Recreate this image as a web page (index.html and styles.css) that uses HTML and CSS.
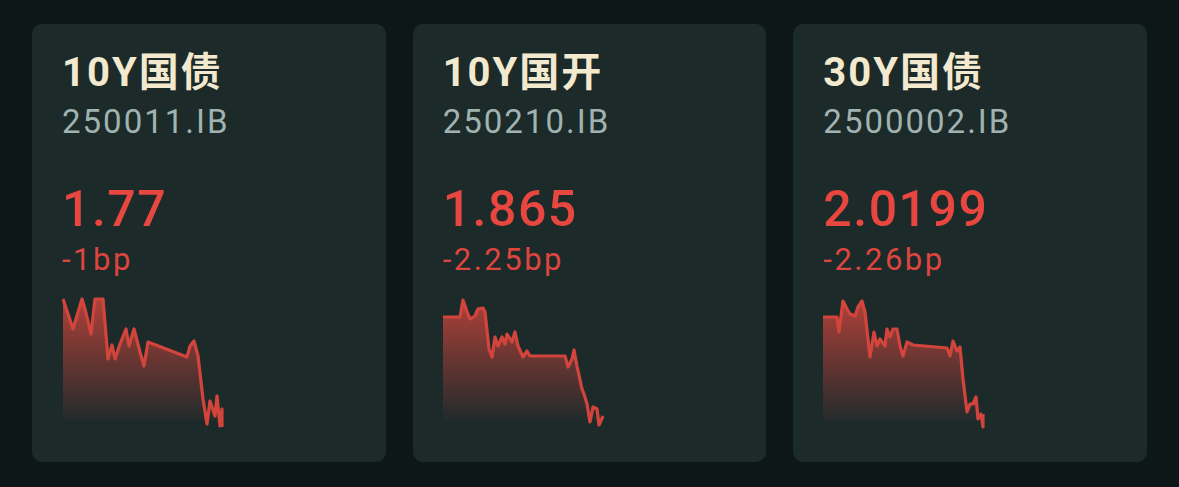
FILE: index.html
```html
<!DOCTYPE html>
<html lang="zh-CN">
<head>
  <meta charset="UTF-8">
  <title>Bond Yields</title>
  <link rel="stylesheet" href="styles.css">
</head>
<body>
  <div class="cards">

    <div class="card">
      <div class="name">10Y国债</div>
      <div class="code">250011.IB</div>
      <div class="yield">1.77</div>
      <div class="change">-1bp</div>
      <svg class="chart" viewBox="0 0 170 132" width="170" height="132">
        <defs>
          <linearGradient id="fill1" x1="0" y1="0" x2="0" y2="1">
            <stop offset="0" stop-color="#c8443c" stop-opacity="0.85"/>
            <stop offset="1" stop-color="#c8443c" stop-opacity="0"/>
          </linearGradient>
        </defs>
        <path fill="url(#fill1)" d="M1 2 L11 32 L20 2 L23 12 L29 37 L33 2 L41 2 L46 62 L50 48 L53 62 L58 47 L64 32 L67 49 L72 32 L78 55 L82 69 L86 45 L125 60 L128 49 L132 44 L136 59 L141 102 L145 127 L148 104 L153 119 L155 99 L158 129 L160 112 L160 124 L1 124 Z"/>
        <polyline class="line" points="1,2 11,32 20,2 23,12 29,37 33,2 41,2 46,62 50,48 53,62 58,47 64,32 67,49 72,32 78,55 82,69 86,45 125,60 128,49 132,44 136,59 141,102 145,127 148,104 153,119 155,99 158,129 160,112 160,130"/>
      </svg>
    </div>

    <div class="card">
      <div class="name">10Y国开</div>
      <div class="code">250210.IB</div>
      <div class="yield">1.865</div>
      <div class="change">-2.25bp</div>
      <svg class="chart" viewBox="0 0 170 132" width="170" height="132">
        <defs>
          <linearGradient id="fill2" x1="0" y1="0" x2="0" y2="1">
            <stop offset="0" stop-color="#c8443c" stop-opacity="0.85"/>
            <stop offset="1" stop-color="#c8443c" stop-opacity="0"/>
          </linearGradient>
        </defs>
        <path fill="url(#fill2)" d="M0 20 L17 20 L20 3 L24 15 L27 22 L32 19 L35 12 L40 11 L42 15 L46 52 L49 60 L52 40 L55 49 L59 40 L62 47 L64 37 L69 45 L72 35 L75 49 L80 60 L84 54 L87 59 L122 59 L125 70 L129 62 L131 53 L134 69 L139 92 L141 97 L144 107 L147 125 L150 110 L154 112 L156 128 L160 119 L160 124 L0 124 Z"/>
        <polyline class="line" points="0,20 17,20 20,3 24,15 27,22 32,19 35,12 40,11 42,15 46,52 49,60 52,40 55,49 59,40 62,47 64,37 69,45 72,35 75,49 80,60 84,54 87,59 122,59 125,70 129,62 131,53 134,69 139,92 141,97 144,107 147,125 150,110 154,112 156,128 160,119"/>
      </svg>
    </div>

    <div class="card">
      <div class="name">30Y国债</div>
      <div class="code">2500002.IB</div>
      <div class="yield">2.0199</div>
      <div class="change">-2.26bp</div>
      <svg class="chart" viewBox="0 0 170 132" width="170" height="132">
        <defs>
          <linearGradient id="fill3" x1="0" y1="0" x2="0" y2="1">
            <stop offset="0" stop-color="#c8443c" stop-opacity="0.85"/>
            <stop offset="1" stop-color="#c8443c" stop-opacity="0"/>
          </linearGradient>
        </defs>
        <path fill="url(#fill3)" d="M0 20 L14 20 L16 35 L20 4 L24 12 L27 17 L32 19 L35 10 L39 4 L42 15 L47 60 L51 35 L54 49 L57 42 L62 49 L64 32 L67 40 L70 32 L74 32 L77 49 L80 59 L84 45 L90 48 L124 51 L127 59 L130 44 L134 54 L137 50 L140 82 L144 115 L147 107 L150 107 L153 100 L155 122 L158 117 L160 130 L160 117 L160 124 L0 124 Z"/>
        <polyline class="line" points="0,20 14,20 16,35 20,4 24,12 27,17 32,19 35,10 39,4 42,15 47,60 51,35 54,49 57,42 62,49 64,32 67,40 70,32 74,32 77,49 80,59 84,45 90,48 124,51 127,59 130,44 134,54 137,50 140,82 144,115 147,107 150,107 153,100 155,122 158,117 160,130 160,117"/>
      </svg>
    </div>

  </div>
</body>
</html>
```

FILE: styles.css
```css
* {
  margin: 0;
  padding: 0;
  box-sizing: border-box;
}

body {
  background: #0d1717;
  font-family: Roboto, "Noto Sans CJK SC", sans-serif;
  width: 1179px;
  height: 487px;
  overflow: hidden;
}

.cards {
  display: flex;
  gap: 27px;
  padding: 24px 32px 0;
}

.card {
  width: 354px;
  height: 438px;
  background: #1c2a2a;
  border-radius: 10px;
  padding: 27px 28px 0 30px;
  display: flex;
  flex-direction: column;
}

.name {
  font-size: 40px;
  font-weight: bold;
  color: #f3e9cf;
  line-height: 44px;
  letter-spacing: 2px;
}

.code {
  font-size: 33px;
  color: #a0b3b1;
  line-height: 40px;
  letter-spacing: 2px;
  margin-top: 7px;
}

.yield {
  font-size: 50px;
  font-weight: 500;
  color: #e8473f;
  line-height: 60px;
  letter-spacing: 1.5px;
  margin-top: 37px;
}

.change {
  font-size: 31px;
  color: #dd453e;
  line-height: 36px;
  letter-spacing: 2.5px;
  margin-top: 3px;
}

.chart {
  display: block;
  margin-top: 19px;
}

.chart .line {
  fill: none;
  stroke: #d3453c;
  stroke-width: 3.2;
  stroke-linejoin: round;
}
```
